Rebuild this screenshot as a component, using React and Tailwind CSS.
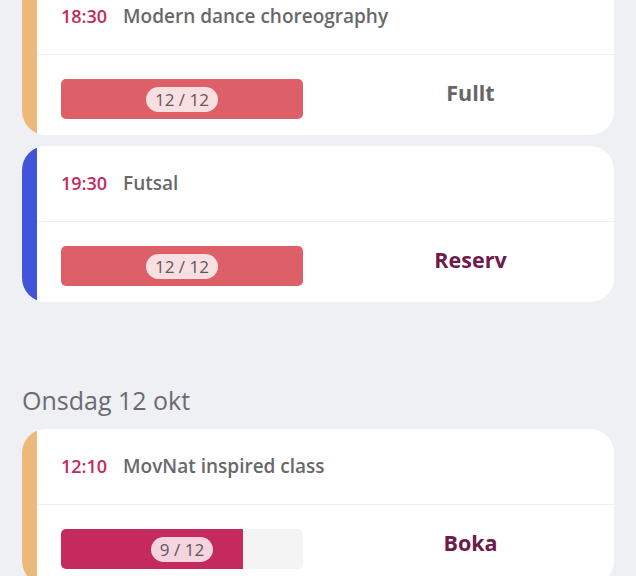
import React from 'react';

const classes = [
    { time: '18:30', title: 'Modern dance choreography', stripe: 'bg-[#edb97a]', booked: 12, total: 12, action: 'Fullt' },
    { time: '19:30', title: 'Futsal', stripe: 'bg-[#3f54db]', booked: 12, total: 12, action: 'Reserv' },
];

const wednesday = [
    { time: '12:10', title: 'MovNat inspired class', stripe: 'bg-[#edb97a]', booked: 9, total: 12, action: 'Boka' },
];

const Capacity = ({ booked, total }) => {
    const full = booked >= total;
    return (
        <div className="relative mt-2 h-10 w-[242px] shrink-0 overflow-hidden rounded-[5px] bg-[#f4f4f5]">
            <div
                className={`h-full ${full ? 'bg-[#dd6068]' : 'bg-[#c42a5e]'}`}
                style={{ width: `${(booked / total) * 100}%` }}
            />
            <div className="absolute inset-0 flex items-center justify-center">
                <span className="rounded-full bg-white/80 px-[9px] text-[17px] leading-[25px] text-[#655559]">
                    {booked} / {total}
                </span>
            </div>
        </div>
    );
};

const ClassCard = ({ item }) => {
    const actionColor = item.action === 'Fullt' ? 'text-[#666668]' : 'text-[#6e1a4a]';
    return (
        <div className="flex overflow-hidden rounded-[24px] bg-white">
            <div className={`w-[15px] shrink-0 ${item.stripe}`} />
            <div className="flex-1">
                <div className="flex h-[76px] items-center gap-4 border-b border-[#eeeff3] px-6 font-semibold">
                    <span className="text-[18px] text-[#c4295e]">{item.time}</span>
                    <span className="text-[19px] text-[#68686b]">{item.title}</span>
                </div>
                <div className="flex h-20 items-center pl-6">
                    <Capacity booked={item.booked} total={item.total} />
                    <div className={`mb-1 flex-1 pl-6 text-center text-[21.5px] font-bold ${actionColor}`}>
                        {item.action}
                    </div>
                </div>
            </div>
        </div>
    );
};

export default function App() {
    return (
        <div className="h-screen overflow-hidden bg-[#eff0f4] px-[22px] font-['Open_Sans',sans-serif]">
            <div className="-mt-[21px] flex flex-col gap-[11px]">
                {classes.map((c) => (
                    <ClassCard key={c.time} item={c} />
                ))}
            </div>

            {/* Wednesday */}
            <h2 className="mt-[81px] mb-3 text-[25px] leading-[34px] text-[#6b6b6f]">Onsdag 12 okt</h2>
            <div className="flex flex-col gap-[11px]">
                {wednesday.map((c) => (
                    <ClassCard key={c.time} item={c} />
                ))}
            </div>
        </div>
    );
}
